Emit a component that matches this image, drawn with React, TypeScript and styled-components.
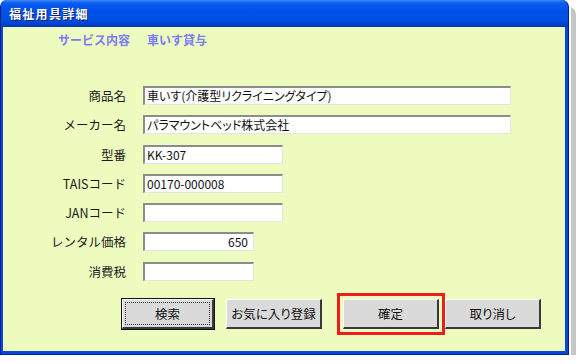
import React from "react";
import styled, { createGlobalStyle } from "styled-components";

const GlobalStyle = createGlobalStyle`
  html, body {
    margin: 0;
    padding: 0;
    background: #ffffff;
  }
  body {
    font-family: "Noto Sans CJK JP", "Liberation Sans", sans-serif;
    font-size: 12px;
    color: #1a1a1a;
  }
`;

type Field = {
  label: string;
  value: string;
  size: "wide" | "medium" | "short";
  align?: "left" | "right";
};

const fields: Field[] = [
  { label: "商品名", value: "車いす(介護型リクライニングタイプ)", size: "wide" },
  { label: "メーカー名", value: "パラマウントベッド株式会社", size: "wide" },
  { label: "型番", value: "KK-307", size: "medium" },
  { label: "TAISコード", value: "00170-000008", size: "medium" },
  { label: "JANコード", value: "", size: "medium" },
  { label: "レンタル価格", value: "650", size: "short", align: "right" },
  { label: "消費税", value: "", size: "short" },
];

const widths = { wide: 368, medium: 140, short: 111 };

export default function App() {
  return (
    <>
      <GlobalStyle />
      <Window>
        <TitleBar>福祉用具詳細</TitleBar>
        <Client>
          <ServiceRow>
            <ServiceText>サービス内容</ServiceText>
            <ServiceText>車いす貸与</ServiceText>
          </ServiceRow>
          <Form>
            {fields.map((f) => (
              <React.Fragment key={f.label}>
                <Label>{f.label}</Label>
                <TextBox $width={widths[f.size]} $align={f.align ?? "left"}>
                  {f.value}
                </TextBox>
              </React.Fragment>
            ))}
          </Form>
          <Buttons>
            <Button $default>
              <FocusRing>検索</FocusRing>
            </Button>
            <Button>お気に入り登録</Button>
            <Highlight>
              <Button>確定</Button>
            </Highlight>
            <Button>取り消し</Button>
          </Buttons>
        </Client>
      </Window>
    </>
  );
}

const Window = styled.div`
  width: 569px;
  height: 355px;
  box-sizing: border-box;
  display: flex;
  flex-direction: column;
  background: #0845dc;
  border: 1px solid #06208c;
  border-top: none;
  border-radius: 7px 7px 0 0;
  padding: 0 3px 3px 2px;
  box-shadow: 2px 2px 0 #ffffff, 7px 7px 0 #c6c6c6;
`;

const TitleBar = styled.div`
  height: 27px;
  flex: none;
  margin: 0 -3px 0 -2px;
  padding-left: 8px;
  display: flex;
  align-items: center;
  border-radius: 5px 8px 0 0;
  background: linear-gradient(
    to bottom,
    #3d8cf8 0px,
    #0a5cf0 3px,
    #0052e8 10px,
    #004ee2 20px,
    #003fc8 25px,
    #0036b0 27px
  );
  color: #ffffff;
  font-weight: 700;
  font-size: 12px;
  letter-spacing: 1.3px;
  text-shadow: 1px 1px 0 #0a1f70;
`;

const Client = styled.div`
  flex: 1;
  background: #eefbbf;
  display: flex;
  flex-direction: column;
`;

const ServiceRow = styled.div`
  display: flex;
  gap: 17px;
  margin-top: 4px;
  padding-left: 55px;
  height: 16px;
  align-items: center;
`;

const ServiceText = styled.span`
  color: #7c7cf4;
  font-weight: 700;
  font-size: 12px;
`;

const Form = styled.div`
  display: grid;
  grid-template-columns: 123px auto;
  grid-auto-rows: 19px;
  column-gap: 17px;
  row-gap: 10.3px;
  margin-top: 39px;
  justify-content: start;
  align-items: center;
`;

const Label = styled.div`
  text-align: right;
  font-size: 12.5px;
  line-height: 19px;
  color: #1a1a1a;
  white-space: nowrap;
`;

const TextBox = styled.div<{ $width: number; $align: "left" | "right" }>`
  width: ${(p) => p.$width}px;
  height: 19px;
  box-sizing: border-box;
  background: #ffffff;
  border-top: 2px solid #8c8c8c;
  border-left: 2px solid #8c8c8c;
  border-right: 1px solid #e4e4e4;
  border-bottom: 1px solid #e4e4e4;
  padding: 0 5px 0 2px;
  font-size: 12px;
  line-height: 16px;
  text-align: ${(p) => p.$align};
  font-feature-settings: "palt";
  white-space: nowrap;
  overflow: hidden;
  color: #111;
`;

const Buttons = styled.div`
  display: flex;
  align-items: center;
  margin-top: 12px;
  padding-left: 119px;
`;

const Button = styled.div<{ $default?: boolean }>`
  width: ${(p) => (p.$default ? 92 : 98)}px;
  height: 30px;
  box-sizing: border-box;
  display: flex;
  align-items: center;
  justify-content: center;
  background: #dadada;
  font-size: 12.5px;
  font-feature-settings: "palt";
  color: #111;
  border-top: 1px solid #ffffff;
  border-left: 1px solid #ffffff;
  border-right: 2px solid #3a3a3a;
  border-bottom: 2px solid #3a3a3a;
  outline: ${(p) => (p.$default ? "1px solid #111" : "none")};
  margin-right: ${(p) => (p.$default ? 12 : 0)}px;

  &:nth-child(2) {
    width: 96px;
    margin-right: 15px;
  }
  &:last-child {
    width: 96px;
  }
`;

const FocusRing = styled.div`
  align-self: stretch;
  flex: 1;
  margin: 2px;
  border: 1px dotted #333;
  display: flex;
  align-items: center;
  justify-content: center;
`;

const Highlight = styled.div`
  border: 3px solid #ee1c1c;
  padding: 3px;
  display: flex;
`;
